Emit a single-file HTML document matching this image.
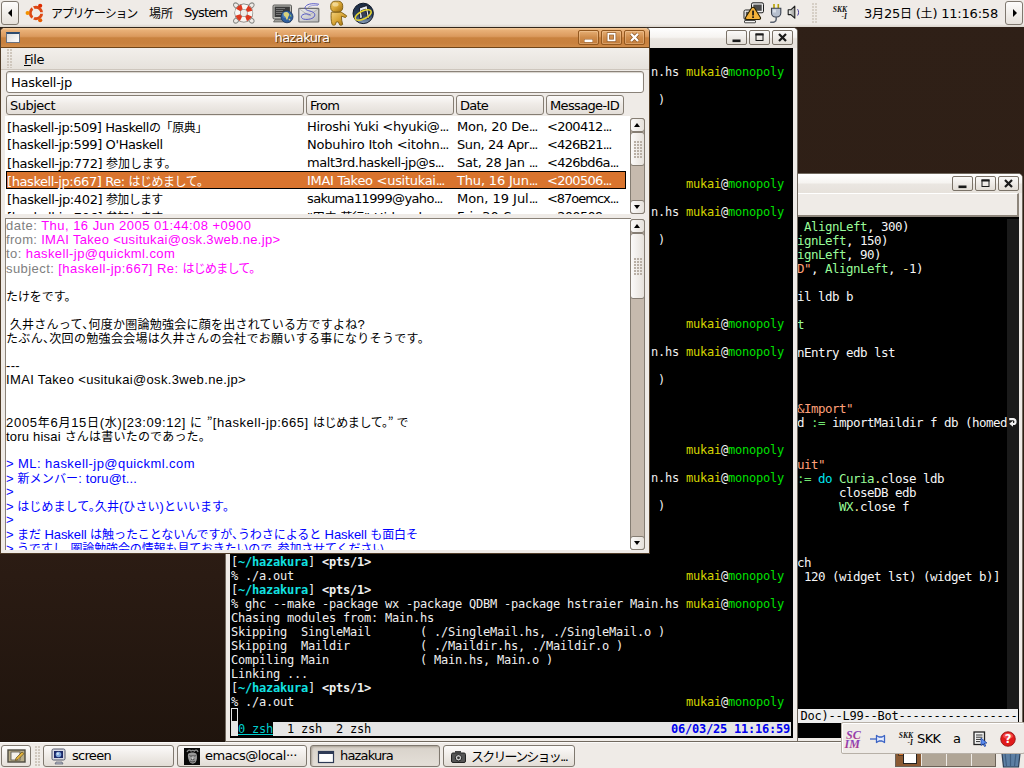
<!DOCTYPE html>
<html lang="ja"><head><meta charset="utf-8"><title>hazakura</title>
<style>
*{box-sizing:border-box;margin:0;padding:0}
html,body{width:1024px;height:768px;overflow:hidden;background:#2e1e15}
body{position:relative;font-family:"DejaVu Sans","Liberation Sans","Noto Sans CJK JP",sans-serif;font-size:13px;color:#000}
.abs{position:absolute}
span.j{font-family:"Noto Sans CJK JP","DejaVu Sans",sans-serif;font-feature-settings:"halt"}
#desk{position:absolute;left:0;top:0;width:1024px;height:768px;background:linear-gradient(to bottom,#2f2017 0%,#2e1e15 65%,#2a1b13 75%,#1f140d 97%);overflow:hidden}
#tp{position:absolute;left:0;top:0;width:1024px;height:27px;background:linear-gradient(#efebe7 0,#efebe7 24px,#d9d3cb 27px)}
#bp{position:absolute;left:0;top:742px;width:1024px;height:26px;background:#efebe7;border-top:1px solid #fbfaf9}
.pt{position:absolute;top:0;height:26px;line-height:26px;font-size:13px;white-space:nowrap;color:#000}
.pt .j{font-size:12px}
.pbtn{position:absolute;border:1px solid #7f786f;border-radius:3px;background:linear-gradient(#fdfcfb,#e6e1db)}
.tri{position:absolute;width:0;height:0;border-style:solid}
.win{position:absolute;background:#efebe7}
.wbtn{position:absolute;width:21px;height:15px;border:1px solid #7a7268;border-radius:2px;background:linear-gradient(#fbfaf9,#e2ddd6)}
.wbtn.o{border-color:#93581f;background:linear-gradient(#e6ae74,#cf8c4b 50%,#c27c3a);box-shadow:inset 0 0 0 1px rgba(255,220,180,.35)}
.wbtn svg{position:absolute;left:0;top:0}
.mono{font-family:"DejaVu Sans Mono","Liberation Mono",monospace;font-size:12px;letter-spacing:-0.2246px;line-height:14px;white-space:pre}
.tl{position:absolute;height:14px;color:#efefef}
.y{color:#d6d600}.g{color:#00e000}.c{color:#12e2e2;font-weight:bold}.b{font-weight:bold}
/* hazakura */
.hdr{position:absolute;top:95px;height:20px;border:1px solid #857d73;border-radius:3px;background:linear-gradient(#fbfaf9 0%,#efebe7 45%,#e3ded8 100%);line-height:20px;padding-left:3px;font-size:13px;white-space:nowrap}
.row{position:absolute;left:6px;width:620px;height:18px;line-height:20px;font-size:13px;white-space:nowrap}
.row span.cell{position:absolute;top:0;white-space:pre}
.row .j{font-size:12px}
.row.sel{background:#d9742e;color:#fff;outline:1px solid #000;outline-offset:-1px}
.bl{position:absolute;left:6px;height:14px;line-height:14px;font-family:"Liberation Sans","Noto Sans CJK JP",sans-serif;font-size:13px;white-space:pre}
.bl .j{font-family:"Noto Sans CJK JP",sans-serif;font-size:12px}
.gr{color:#808080}.mg{color:#ff00ff}.bu{color:#0000ff}
.sb{position:absolute;width:15px;background:#c6baae;border:1px solid #857d73;border-radius:3px}
.sbb{position:absolute;left:-1px;width:15px;height:14px;border:1px solid #857d73;border-radius:3px;background:linear-gradient(90deg,#fbfaf9,#e6e1db)}
.el{letter-spacing:-1.3px}
.mono.em{font-size:12.5px;letter-spacing:-0.5256px}
span.jf{font-family:"Noto Sans CJK JP","DejaVu Sans",sans-serif;font-size:12px}
</style></head>
<body><div id="desk">
<div id="tp">
<div class="pbtn" style="left:1px;top:1px;width:18px;height:24px"><div class="tri" style="left:6px;top:7px;border-width:4.5px 4px 4.5px 0;border-color:transparent #000 transparent transparent"></div></div>
<svg class="abs" style="left:25px;top:2px" width="22" height="22" viewBox="-10 -10 20 20"><circle r="5.2" fill="none" stroke="#dd4814" stroke-width="2.6"/><g stroke="#efebe7" stroke-width="1.4"><line x1="0" y1="0" x2="9" y2="0"/><line x1="0" y1="0" x2="9" y2="0" transform="rotate(120)"/><line x1="0" y1="0" x2="9" y2="0" transform="rotate(240)"/></g><circle cx="-7.6" cy="0" r="1.9" fill="#f29100"/><circle cx="3.8" cy="-6.6" r="1.9" fill="#dd2c00"/><circle cx="3.8" cy="6.6" r="1.9" fill="#e65c00"/></svg>
<div class="pt" style="left:51px"><span class="" style="letter-spacing:-1.221px;"><span class="j">アプリケーション</span></span></div>
<div class="pt" style="left:149px"><span class="" style="letter-spacing:-0.008px;"><span class="j">場所</span></span></div>
<div class="pt" style="left:184px"><span class="" style="letter-spacing:-0.914px;">System</span></div>
<svg class="abs" style="left:233px;top:2px" width="23" height="22" viewBox="0 0 23 22"><g fill="none" stroke="#8a8a86" stroke-width="1"><ellipse cx="3.300" cy="3.600" rx="3" ry="2.200" transform="rotate(40 3.300 3.600)"/><ellipse cx="18.300" cy="3.600" rx="3" ry="2.200" transform="rotate(-40 18.300 3.600)"/><ellipse cx="3.300" cy="18.400" rx="3" ry="2.200" transform="rotate(-40 3.300 18.400)"/><ellipse cx="18.300" cy="18.400" rx="3" ry="2.200" transform="rotate(40 18.300 18.400)"/></g><circle cx="10.800" cy="11" r="6.300" fill="none" stroke="#77736e" stroke-width="6.200"/><circle cx="10.800" cy="11" r="6.300" fill="none" stroke="#f7f6f3" stroke-width="5"/><circle cx="10.800" cy="11" r="6.300" fill="none" stroke="#dd3a20" stroke-width="5" stroke-dasharray="4.618 5.278" stroke-dashoffset="-2.639"/></svg>
<svg class="abs" style="left:272px;top:3px" width="22" height="22" viewBox="0 0 22 22"><rect x="1" y="2" width="18.500" height="14" rx="1.200" fill="#bdbdb8" stroke="#4a4a48" stroke-width="0.900"/><rect x="2.600" y="3.600" width="15.300" height="10.400" fill="#3a3a3a"/><path d="M4 5.500h9M4 7.500h7M4 9.500h8M4 11.500h5" stroke="#8f8f8f" stroke-width="0.700"/><path d="M3 16.500h14l1.500 2.500H1.500z" fill="#9c9c98" stroke="#4a4a48" stroke-width="0.600"/><circle cx="15" cy="13.800" r="6" fill="#2f5f9f" stroke="#1a365f" stroke-width="0.800"/><circle cx="13.600" cy="12" r="3.300" fill="#5f8fd0" opacity="0.550"/><path d="M11.500 10.300c1.200-1.300 2.800-1.600 4.300-.8l1.200 1.300c.6 1.200-.2 2-.8 3-.4 1.200-.3 2.400-1.200 3-.9-.3-1-1.600-1.300-2.600-.4-1-1.800-1.200-2-2.300z" fill="#d9d17c"/><path d="M17.600 11.200c1 .4 1.800 1.200 2 2.200-.6.800-1.400.2-1.800-.6z" fill="#8fb56a"/><path d="M16.800 15.800c.8-.4 1.500 0 1.600.7-.4.900-1.100 1.200-1.700.6z" fill="#d9d17c"/></svg>
<svg class="abs" style="left:297px;top:2px" width="24" height="22" viewBox="0 0 24 22"><defs><linearGradient id="mg" x1="0" y1="0" x2="1" y2="1"><stop offset="0" stop-color="#ededed"/><stop offset="1" stop-color="#b9b9b9"/></linearGradient></defs><rect x="1.800" y="6.400" width="20" height="13.600" rx="0.800" fill="url(#mg)" stroke="#6e6e6e" stroke-width="1.200"/><path d="M2.500 7l9.300 6.500 9.300-6.500" fill="none" stroke="#a5a5a5" stroke-width="0.700"/><path d="M22 2.300c-5-1-11-1-13.500 2.200-1.500 2.500 1 3.800 4.500 4.600 3.500.8 5.500 2.400 4.600 4.800-1 2.800-6.500 4.200-11 3.200-2.500-.8-3-2.800-1-4.300 2.500-1.600 6-1 8 .5" fill="none" stroke="#4a4ec4" stroke-width="1" opacity="0.900"/><path d="M21 3.500c-4-.5-8 0-10 2" fill="none" stroke="#7a7ed8" stroke-width="0.700"/></svg>
<svg class="abs" style="left:329px;top:0px" width="19" height="26" viewBox="0 0 19 26"><defs><linearGradient id="gd" x1="0" y1="0" x2="1" y2="1"><stop offset="0" stop-color="#f2d07c"/><stop offset="0.500" stop-color="#d9a636"/><stop offset="1" stop-color="#9a6a0e"/></linearGradient></defs><path d="M2.300 12.200c-.5 4.300-.3 8.500.8 12.300.8.900 2.200.9 3.200.2l.9-2.600c.8-.3 1.500-.3 2.200 0l1.300 2.800c1 .6 2.200.4 3-.4-.9-2.900-1.300-5.700-1.300-8.300l3.900 1.300c.9-.3 1.400-1 1.300-1.800l-5.500-3.600z" fill="url(#gd)" stroke="#7a5a10" stroke-width="0.900" stroke-linejoin="round"/><rect x="1.700" y="1.200" width="12" height="10.800" rx="4.300" fill="url(#gd)" stroke="#7a5a10" stroke-width="0.900"/><ellipse cx="6.500" cy="4.500" rx="3" ry="2" fill="#fff3c8" opacity="0.550"/></svg>
<svg class="abs" style="left:352px;top:2px" width="23" height="23" viewBox="0 0 23 23"><defs><linearGradient id="dk" x1="0" y1="0" x2="0" y2="1"><stop offset="0" stop-color="#1a2940"/><stop offset="0.600" stop-color="#2c4060"/><stop offset="1" stop-color="#8ea3be"/></linearGradient></defs><circle cx="11.200" cy="11.400" r="10.200" fill="url(#dk)" stroke="#0f1826" stroke-width="1"/><path d="M7.500 6l7.500-2.500 2.500 12-2 1.200-1.800-9.500-4.500 1.500 1.300 7-2.800 1z" fill="#e6ebf2" stroke="#14141c" stroke-width="0.900" stroke-linejoin="round"/><path d="M9.500 9.500l3.500-1.200.8 4.500-3.400 1z" fill="#3a3f55"/><ellipse cx="11.200" cy="13" rx="8.800" ry="3.900" transform="rotate(-27 11.200 13)" fill="none" stroke="#e6d52e" stroke-width="1.600"/></svg>
<svg class="abs" style="left:742px;top:1px" width="24" height="24" viewBox="0 0 24 24"><rect x="9.500" y="1.800" width="12" height="10" rx="1.500" fill="#ececec" stroke="#1e1e1e" stroke-width="1"/><rect x="11.300" y="3.600" width="8.400" height="6.200" fill="#4a4a4a"/><rect x="2" y="9" width="12" height="9.500" rx="1.500" fill="#f4f4f4" stroke="#1e1e1e" stroke-width="1"/><rect x="3.800" y="10.800" width="8.400" height="5.800" fill="#555"/><rect x="2.500" y="19.500" width="11" height="2.300" rx="0.500" fill="#f4f4f4" stroke="#1e1e1e" stroke-width="0.800"/><path d="M11 6.200c.8 0 1.300.4 1.700 1.100l5.600 8.900c.7 1.200.1 2.300-1.300 2.300H5c-1.400 0-2-1.100-1.300-2.300l5.600-8.900c.400-.700.900-1.100 1.700-1.100z" fill="#f4b23a" stroke="#2a2000" stroke-width="1.100" stroke-linejoin="round"/><rect x="10.200" y="9.600" width="1.700" height="4.800" rx="0.500" fill="#111"/><rect x="10.200" y="15.300" width="1.700" height="1.700" rx="0.500" fill="#111"/></svg>
<svg class="abs" style="left:768px;top:1px" width="15" height="24" viewBox="0 0 15 24"><path d="M6 3v4.500M10.300 3v4.500" stroke="#d8c21a" stroke-width="1.700"/><path d="M6 3v4.500M10.300 3v4.500" stroke="#5a5200" stroke-width="0.400" fill="none"/><path d="M3.500 7.300h9.300v4.700c0 2.300-1.800 4-4 4h-1.300c-2.200 0-4-1.700-4-4z" fill="#b6bfce" stroke="#3a4150" stroke-width="1.100"/><path d="M5 8.500h3v3h-3z" fill="#e6eaf2" opacity="0.700"/><path d="M8.200 16v2.200c0 2.500-2.500 3.600-6 3" fill="none" stroke="#5a6270" stroke-width="1.500"/></svg>
<svg class="abs" style="left:786px;top:5px" width="16" height="15" viewBox="0 0 16 15"><defs><linearGradient id="spk" x1="0" y1="0" x2="1" y2="0"><stop offset="0" stop-color="#f2f2f0"/><stop offset="1" stop-color="#9a9a98"/></linearGradient></defs><path d="M2.200 4.800h2.600l4-3.600v12l-4-3.600H2.200z" fill="url(#spk)" stroke="#1c1c1c" stroke-width="1.100" stroke-linejoin="round"/><path d="M11.600 4.200c1.300 1.900 1.300 4.500 0 6.300" fill="none" stroke="#4a3f9a" stroke-width="1"/></svg>
<div class="abs" style="left:812px;top:3px;width:5px;height:21px;background-image:radial-gradient(circle at 1px 1px,#d6cfc6 0.800px,transparent 1px);background-size:3px 3px"></div>
<div class="abs" style="left:829px;top:6px;width:18px;height:14px;font-family:'Liberation Serif','DejaVu Serif',serif;font-style:italic;font-weight:bold;font-size:7.500px;line-height:7px;color:#111;text-align:right;white-space:pre">SKK
-I</div>
<div class="pt" style="left:864px"><span class="" style="letter-spacing:-0.205px;">3<span class="j">月</span>25<span class="j">日</span> (<span class="j">土</span>) 11:16:58</span></div>
<div class="pbtn" style="left:1005px;top:1px;width:18px;height:24px"><div class="tri" style="left:7px;top:7px;border-width:4.5px 0 4.5px 4px;border-color:transparent transparent transparent #000"></div></div>
</div>
<div class="win" id="em" style="left:790px;top:173px;width:233px;height:569px;border:1px solid #71695f;border-radius:5px 5px 0 0;overflow:hidden">
<div class="abs" style="left:0;top:0;width:233px;height:19px;background:linear-gradient(#ffffff 0%,#f6f4f1 46%,#eae6e1 54%,#e6e1db 100%)"></div>
<div class="abs" style="left:0;top:19px;width:228px;height:24px;background:#efebe7;border-top:1px solid #fff;border-right:2px solid #8d857b;border-bottom:2px solid #8d857b"></div>
<div class="abs" style="left:0;top:43px;width:228px;height:521px;background:#000"></div>
<div class="abs" style="left:216px;top:45px;width:12px;height:490px;background:#1a1a1a"></div>
<div class="tl mono em" style="left:6px;top:46px"><span style="color:#f5f5f5"> </span><span style="color:#98fb98">AlignLeft</span><span style="color:#f5f5f5">, 300)</span></div>
<div class="tl mono em" style="left:6px;top:60px"><span style="color:#98fb98">ignLeft</span><span style="color:#f5f5f5">, 150)</span></div>
<div class="tl mono em" style="left:6px;top:74px"><span style="color:#98fb98">ignLeft</span><span style="color:#f5f5f5">, 90)</span></div>
<div class="tl mono em" style="left:6px;top:88px"><span style="color:#ffa07a">D"</span><span style="color:#f5f5f5">, </span><span style="color:#98fb98">AlignLeft</span><span style="color:#f5f5f5">, </span><span style="color:#eedd82">-</span><span style="color:#f5f5f5">1)</span></div>
<div class="tl mono em" style="left:6px;top:116px"><span style="color:#f5f5f5">il ldb b</span></div>
<div class="tl mono em" style="left:6px;top:144px"><span style="color:#98fb98">t</span></div>
<div class="tl mono em" style="left:6px;top:172px"><span style="color:#f5f5f5">nEntry edb lst</span></div>
<div class="tl mono em" style="left:6px;top:228px"><span style="color:#ffa07a">&amp;Import"</span></div>
<div class="tl mono em" style="left:6px;top:242px"><span style="color:#f5f5f5">d </span><span style="color:#70e670">:=</span><span style="color:#f5f5f5"> importMaildir f db (homed</span></div>
<div class="tl mono em" style="left:6px;top:284px"><span style="color:#ffa07a">uit"</span></div>
<div class="tl mono em" style="left:6px;top:298px"><span style="color:#70e670">:=</span><span style="color:#f5f5f5"> </span><span style="color:#00e5ee">do</span><span style="color:#f5f5f5"> </span><span style="color:#98fb98">Curia</span><span style="color:#eedd82">.</span><span style="color:#f5f5f5">close ldb</span></div>
<div class="tl mono em" style="left:6px;top:312px"><span style="color:#f5f5f5">      closeDB edb</span></div>
<div class="tl mono em" style="left:6px;top:326px"><span style="color:#f5f5f5">      </span><span style="color:#98fb98">WX</span><span style="color:#eedd82">.</span><span style="color:#f5f5f5">close f</span></div>
<div class="tl mono em" style="left:6px;top:382px"><span style="color:#f5f5f5">ch</span></div>
<div class="tl mono em" style="left:6px;top:396px"><span style="color:#f5f5f5"> 120 (widget lst) (widget b)]</span></div>
<svg class="abs" style="left:217px;top:243px" width="10" height="10"><path d="M1.200 2.200h4a2.300 2.300 0 0 1 2.300 2.300v0.500a2 2 0 0 1 -2 2h-1" stroke="#f2f2f2" stroke-width="2.200" fill="none"/><path d="M5 3.800L1.200 6.800l3.800 3z" fill="#f2f2f2"/></svg>
<div class="abs mono" style="left:7px;top:535px;width:220px;height:14px;background:#eeeeee;color:#000;overflow:hidden;padding-left:2.5px">Doc)--L99--Bot-------------------------</div>
<div class="wbtn" style="left:161px;top:2px"><svg width="19" height="13" viewBox="-0.5 0 19 13"><rect x="5" y="8.5" width="8" height="2.6" fill="#1a1a1a"/></svg></div><div class="wbtn" style="left:184px;top:2px"><svg width="19" height="13" viewBox="-0.5 0 19 13"><rect x="5.500" y="3" width="7" height="6.500" fill="none" stroke="#1a1a1a" stroke-width="1"/><rect x="5" y="2.500" width="8" height="2" fill="#1a1a1a"/></svg></div><div class="wbtn" style="left:207px;top:2px"><svg width="19" height="13" viewBox="-0.5 0 19 13"><path d="M5.500 3L12.500 10M12.500 3L5.500 10" stroke="#1a1a1a" stroke-width="2.2" fill="none"/></svg></div>
</div>
<div class="win" id="tm" style="left:225px;top:27px;width:573px;height:715px;border:1px solid #71695f;border-top-color:#3c3128;border-radius:5px 5px 0 0;overflow:hidden">
<div class="abs" style="left:0;top:0;width:573px;height:20px;background:linear-gradient(#ffffff 0%,#f6f4f1 46%,#eae6e1 54%,#e6e1db 100%)"></div>
<div class="abs" style="left:4px;top:20px;width:563px;height:690px;background:#000"></div>
<div class="tl mono" style="left:425px;top:37px">n.hs <span class="y">mukai</span>@<span class="g">monopoly</span></div>
<div class="tl mono" style="left:425px;top:65px"> )</div>
<div class="tl mono" style="left:425px;top:149px">     <span class="y">mukai</span>@<span class="g">monopoly</span></div>
<div class="tl mono" style="left:425px;top:177px">n.hs <span class="y">mukai</span>@<span class="g">monopoly</span></div>
<div class="tl mono" style="left:425px;top:205px"> )</div>
<div class="tl mono" style="left:425px;top:289px">     <span class="y">mukai</span>@<span class="g">monopoly</span></div>
<div class="tl mono" style="left:425px;top:317px">n.hs <span class="y">mukai</span>@<span class="g">monopoly</span></div>
<div class="tl mono" style="left:425px;top:345px"> )</div>
<div class="tl mono" style="left:425px;top:415px">     <span class="y">mukai</span>@<span class="g">monopoly</span></div>
<div class="tl mono" style="left:425px;top:443px">n.hs <span class="y">mukai</span>@<span class="g">monopoly</span></div>
<div class="tl mono" style="left:425px;top:471px"> )</div>
<div class="tl mono" style="left:5px;top:527px">[<span class="c">~/hazakura</span>] <span class="b">&lt;pts/1&gt;</span></div>
<div class="tl mono" style="left:5px;top:541px">% ./a.out                                                        <span class="y">mukai</span>@<span class="g">monopoly</span></div>
<div class="tl mono" style="left:5px;top:555px">[<span class="c">~/hazakura</span>] <span class="b">&lt;pts/1&gt;</span></div>
<div class="tl mono" style="left:5px;top:569px">% ghc --make -package wx -package QDBM -package hstraier Main.hs <span class="y">mukai</span>@<span class="g">monopoly</span></div>
<div class="tl mono" style="left:5px;top:583px">Chasing modules from: Main.hs</div>
<div class="tl mono" style="left:5px;top:597px">Skipping  SingleMail       ( ./SingleMail.hs, ./SingleMail.o )</div>
<div class="tl mono" style="left:5px;top:611px">Skipping  Maildir          ( ./Maildir.hs, ./Maildir.o )</div>
<div class="tl mono" style="left:5px;top:625px">Compiling Main             ( Main.hs, Main.o )</div>
<div class="tl mono" style="left:5px;top:639px">Linking ...</div>
<div class="tl mono" style="left:5px;top:653px">[<span class="c">~/hazakura</span>] <span class="b">&lt;pts/1&gt;</span></div>
<div class="tl mono" style="left:5px;top:667px">% ./a.out                                                        <span class="y">mukai</span>@<span class="g">monopoly</span></div>
<div class="abs" style="left:5px;top:680px;width:7px;height:14px;border:1px solid #e5e5e5"></div>
<div class="abs mono" style="left:5px;top:694px;width:560px;height:14px;line-height:15px;background:#e5e5e5;color:#000"> <span style="background:#000;color:#00cdcd;text-decoration:underline">0 zsh</span>  1 zsh  2 zsh<span class="abs" style="right:1px;top:0;color:#0000ee;font-weight:bold">06/03/25 11:16:59</span></div>
<div class="wbtn" style="left:500px;top:2px"><svg width="19" height="13" viewBox="-0.5 0 19 13"><rect x="5" y="8.5" width="8" height="2.6" fill="#1a1a1a"/></svg></div><div class="wbtn" style="left:523px;top:2px"><svg width="19" height="13" viewBox="-0.5 0 19 13"><rect x="5.500" y="3" width="7" height="6.500" fill="none" stroke="#1a1a1a" stroke-width="1"/><rect x="5" y="2.500" width="8" height="2" fill="#1a1a1a"/></svg></div><div class="wbtn" style="left:546px;top:2px"><svg width="19" height="13" viewBox="-0.5 0 19 13"><path d="M5.500 3L12.500 10M12.500 3L5.500 10" stroke="#1a1a1a" stroke-width="2.2" fill="none"/></svg></div>
</div>
<div class="win" id="hz" style="left:0;top:27px;width:650px;height:527px;border:1px solid #4f3c28;border-top-color:#33261a;border-radius:5px 5px 0 0;overflow:hidden">
<div class="abs" style="left:0;top:0;width:648px;height:20px;background:linear-gradient(#f4cda0 0%,#e9b077 12%,#db9a5d 44%,#c9823f 52%,#c8813e 80%,#d08c4a 100%);border-bottom:1px solid #6f4519"></div>
<div class="abs" style="left:5px;top:4px;width:14px;height:11px;border:1px solid #6b7280;background:linear-gradient(135deg,#dcdcdc,#ffffff);border-top:2px solid #2c4a6e"></div>
<div class="abs" style="left:0;top:0;width:602px;height:20px;line-height:20px;text-align:center;color:#fff;font-size:13px;text-shadow:1px 1px 0 #5b3a15"><span class="" style="letter-spacing:-0.586px;">hazakura</span></div>
<div class="wbtn o" style="left:577px;top:2px"><svg width="19" height="13" viewBox="-0.5 0 19 13"><rect x="5" y="8.5" width="8" height="2.6" fill="#fff" stroke="#8a5424" stroke-width="0.8" paint-order="stroke"/></svg></div><div class="wbtn o" style="left:600px;top:2px"><svg width="19" height="13" viewBox="-0.5 0 19 13"><rect x="5.8" y="2.8" width="6.4" height="6.6" fill="none" stroke="#8a5424" stroke-width="3"/><rect x="5.8" y="2.8" width="6.4" height="6.6" fill="none" stroke="#fff" stroke-width="1.7"/></svg></div><div class="wbtn o" style="left:623px;top:2px"><svg width="19" height="13" viewBox="-0.5 0 19 13"><path d="M5.5 2.8L12.5 10M12.5 2.8L5.5 10" stroke="#8a5424" stroke-width="3.6" fill="none"/><path d="M5.5 2.8L12.5 10M12.5 2.8L5.500 10" stroke="#fff" stroke-width="2.3" fill="none"/></svg></div>
<div class="abs" style="left:0;top:20px;width:648px;height:22px;background:linear-gradient(#f2efeb,#e6e2dc);border-bottom:1px solid #cdc6bd"></div>
<div class="abs" style="left:6px;top:21px;width:5px;height:19px;background-image:radial-gradient(circle at 1px 1px,#cfc7bd 0.8px,transparent 1px);background-size:3px 3px"></div>
<div class="abs" style="left:23px;top:20px;height:22px;line-height:23px;font-size:13px"><span class="" style="letter-spacing:-0.441px;display:inline-block">File</span><div class="abs" style="left:0;top:17px;width:7px;height:1px;background:#000"></div></div>
<div class="abs" style="left:5px;top:43px;width:638px;height:22px;background:#fff;border:1px solid #8a8279;border-radius:3px;box-shadow:inset 0 1px 1px #d8d3cc;line-height:21px;padding-left:4px;font-size:13px"><span class="" style="letter-spacing:-0.236px;">Haskell-jp</span></div>
<div class="hdr" style="left:5px;top:67px;width:298px"><span class="" style="letter-spacing:-0.516px;">Subject</span></div>
<div class="hdr" style="left:305px;top:67px;width:148px"><span class="" style="letter-spacing:-0.805px;">From</span></div>
<div class="hdr" style="left:455px;top:67px;width:88px"><span class="" style="letter-spacing:-0.770px;">Date</span></div>
<div class="hdr" style="left:545px;top:67px;width:78px"><span class="" style="letter-spacing:-0.652px;">Message-ID</span></div>
<div class="abs" style="left:4px;top:88px;width:625px;height:98px;background:#fff;overflow:hidden">
<div class="row" style="left:1px;top:1px"><span class="cell" style="left:1px"><span class="" style="letter-spacing:-0.421px;">[haskell-jp:509] Haskell</span><span class="" style="letter-spacing:-0.403px;"><span class="jf">の「原典」</span></span></span><span class="cell" style="left:301px"><span class="" style="letter-spacing:-0.292px;">Hiroshi Yuki &lt;hyuki@</span><span class="el">...</span></span><span class="cell" style="left:451px"><span class="" style="letter-spacing:-0.266px;">Mon, 20 De</span><span class="el">...</span></span><span class="cell" style="left:541px"><span class="" style="letter-spacing:-0.688px;">&lt;200412</span><span class="el">...</span></span></div>
<div class="row" style="left:1px;top:19px"><span class="cell" style="left:1px"><span class="" style="letter-spacing:-0.393px;">[haskell-jp:599] O'Haskell</span></span><span class="cell" style="left:301px"><span class="" style="letter-spacing:-0.198px;">Nobuhiro Itoh &lt;itohn</span><span class="el">...</span></span><span class="cell" style="left:451px"><span class="" style="letter-spacing:-0.406px;">Sun, 24 Apr</span><span class="el">...</span></span><span class="cell" style="left:541px"><span class="" style="letter-spacing:-0.781px;">&lt;426B21</span><span class="el">...</span></span></div>
<div class="row" style="left:1px;top:37px"><span class="cell" style="left:1px"><span class="" style="letter-spacing:-0.370px;">[haskell-jp:772] </span><span class="" style="letter-spacing:-0.051px;"><span class="j">参加します。</span></span></span><span class="cell" style="left:301px"><span class="" style="letter-spacing:-0.450px;">malt3rd.haskell-jp@s</span><span class="el">...</span></span><span class="cell" style="left:451px"><span class="" style="letter-spacing:-0.227px;">Sat, 28 Jan </span><span class="el">...</span></span><span class="cell" style="left:541px"><span class="" style="letter-spacing:-0.719px;">&lt;426bd6a</span><span class="el">...</span></span></div>
<div class="row sel" style="left:1px;top:55px"><span class="cell" style="left:1px"><span class="" style="letter-spacing:-0.417px;">[haskell-jp:667] Re: </span><span class="" style="letter-spacing:-0.470px;"><span class="j">はじめまして。</span></span></span><span class="cell" style="left:301px"><span class="" style="letter-spacing:-0.293px;">IMAI Takeo &lt;usitukai</span><span class="el">...</span></span><span class="cell" style="left:451px"><span class="" style="letter-spacing:-0.180px;">Thu, 16 Jun</span><span class="el">...</span></span><span class="cell" style="left:541px"><span class="" style="letter-spacing:-0.690px;">&lt;200506</span><span class="el">...</span></span></div>
<div class="row" style="left:1px;top:73px"><span class="cell" style="left:1px"><span class="" style="letter-spacing:-0.370px;">[haskell-jp:402] </span><span class="" style="letter-spacing:-0.662px;"><span class="j">参加します</span></span></span><span class="cell" style="left:301px"><span class="" style="letter-spacing:-0.641px;">sakuma11999@yaho</span><span class="el">...</span></span><span class="cell" style="left:451px"><span class="" style="letter-spacing:-0.031px;">Mon, 19 Jul</span><span class="el">...</span></span><span class="cell" style="left:541px"><span class="" style="letter-spacing:-1.025px;">&lt;87oemcx</span><span class="el">...</span></span></div>
<div class="row" style="left:1px;top:91px"><span class="cell" style="left:1px"><span class="" style="letter-spacing:-0.370px;">[haskell-jp:706] </span><span class="" style="letter-spacing:-0.661px;"><span class="j">参加します</span></span></span><span class="cell" style="left:301px"><span class="" style="letter-spacing:-0.182px;">"<span class="j">田中</span> <span class="j">英行</span>" Hidenobu</span><span class="el">...</span></span><span class="cell" style="left:451px"><span class="" style="letter-spacing:0.251px;">Fri, 30 Sep</span><span class="el">...</span></span><span class="cell" style="left:541px"><span class="" style="letter-spacing:-0.688px;">&lt;200509</span><span class="el">...</span></span></div>
</div>
<div class="sb" style="left:629px;top:90px;height:96px"><div class="sbb" style="top:-1px"><div class="tri" style="left:3px;top:4px;border-width:0 3.5px 4px 3.5px;border-color:transparent transparent #000 transparent"></div></div><div class="sbb" style="top:81px"><div class="tri" style="left:3px;top:4px;border-width:4px 3.5px 0 3.5px;border-color:#000 transparent transparent transparent"></div></div><div class="sbb" style="top:13px;height:34px"><div class="abs" style="left:3px;top:8px;width:8px;height:17px;background-image:radial-gradient(circle at 1px 1px,#b9b0a6 0.8px,transparent 1px);background-size:3px 3px"></div></div></div>
<div class="abs" style="left:4px;top:190px;width:626px;height:332px;background:#fff;border-top:1px solid #8a8279;border-left:1px solid #8a8279;overflow:hidden">
<div class="bl" style="left:0px;top:0px;letter-spacing:0.475px;"><span class="gr">date: </span><span class="mg">Thu, 16 Jun 2005 01:44:08 +0900</span></div>
<div class="bl" style="left:0px;top:14px;letter-spacing:0.323px;"><span class="gr">from: </span><span class="mg">IMAI Takeo &lt;usitukai@osk.3web.ne.jp&gt;</span></div>
<div class="bl" style="left:0px;top:28px;letter-spacing:0.414px;"><span class="gr">to: </span><span class="mg">haskell-jp@quickml.com</span></div>
<div class="bl" style="left:0px;top:42px"><span class="gr" style="letter-spacing:0.431px;">subject: </span><span class="mg" style="letter-spacing:0.447px;">[haskell-jp:667] Re: </span><span class="mg" style="letter-spacing:-0.771px;"><span class="j">はじめまして。</span></span></div>
<div class="bl" style="left:0px;top:70px;letter-spacing:-0.084px;"><span class="j">たけをです。</span></div>
<div class="bl" style="left:0px;top:98px;letter-spacing:0.248px;"> <span class="j">久井さんって、何度か圏論勉強会に顔を出されている方ですよね</span>?</div>
<div class="bl" style="left:0px;top:112px;letter-spacing:0.320px;"><span class="j">たぶん、次回の勉強会会場は久井さんの会社でお願いする事になりそうです。</span></div>
<div class="bl" style="left:0px;top:140px;letter-spacing:0.333px;">---</div>
<div class="bl" style="left:0px;top:154px;letter-spacing:0.345px;">IMAI Takeo &lt;usitukai@osk.3web.ne.jp&gt;</div>
<div class="bl" style="left:0px;top:196px"><span class="" style="letter-spacing:0.708px;">2005<span class="j">年</span>6<span class="j">月</span>15<span class="j">日</span>(<span class="j">水</span>)</span><span class="" style="letter-spacing:0.551px;">[23:09:12] </span><span class="" style="letter-spacing:0.455px;"><span class="j">に</span> <span class="j">”</span></span><span class="" style="letter-spacing:0.532px;">[haskell-jp:665] </span><span class="" style="letter-spacing:-0.343px;"><span class="j">はじめまして。”</span> <span class="j">で</span></span></div>
<div class="bl" style="left:0px;top:210px;letter-spacing:0.206px;">toru hisai <span class="j">さんは書いたのであった。</span></div>
<div class="bl" style="left:0px;top:238px;letter-spacing:0.434px;"><span class="bu">&gt; ML: haskell-jp@quickml.com</span></div>
<div class="bl" style="left:0px;top:252px;letter-spacing:0.139px;"><span class="bu">&gt; <span class="j">新メンバー</span>: toru@t...</span></div>
<div class="bl" style="left:0px;top:266px;letter-spacing:-0.602px;"><span class="bu">&gt;</span></div>
<div class="bl" style="left:0px;top:280px;letter-spacing:0.044px;"><span class="bu">&gt; <span class="j">はじめまして。久井</span>(<span class="j">ひさい</span>)<span class="j">といいます。</span></span></div>
<div class="bl" style="left:0px;top:294px;letter-spacing:-0.594px;"><span class="bu">&gt;</span></div>
<div class="bl" style="left:0px;top:308px;letter-spacing:-0.074px;"><span class="bu">&gt; <span class="j">まだ</span> Haskell <span class="j">は触ったことないんですが、うわさによると</span> Haskell <span class="j">も面白そ</span></span></div>
<div class="bl" style="left:0px;top:322px;letter-spacing:-0.115px;"><span class="bu">&gt; <span class="j">うですし、圏論勉強会の情報も見ておきたいので、参加させてください。</span></span></div>
</div>
<div class="sb" style="left:629px;top:191px;height:331px"><div class="sbb" style="top:-1px"><div class="tri" style="left:3px;top:4px;border-width:0 3.5px 4px 3.5px;border-color:transparent transparent #000 transparent"></div></div><div class="sbb" style="top:316px"><div class="tri" style="left:3px;top:4px;border-width:4px 3.5px 0 3.5px;border-color:#000 transparent transparent transparent"></div></div><div class="sbb" style="top:13px;height:66px"><div class="abs" style="left:3px;top:24px;width:8px;height:17px;background-image:radial-gradient(circle at 1px 1px,#b9b0a6 0.8px,transparent 1px);background-size:3px 3px"></div></div></div>
</div>
<div id="bp">
<div class="pbtn" style="left:1px;top:2px;width:30px;height:22px"><svg class="abs" style="left:5px;top:3px" width="20" height="15" viewBox="0 0 20 15"><rect x="1" y="1" width="17" height="12" fill="#b8ad8a" stroke="#4d4a40" stroke-width="1.4"/><rect x="4" y="3" width="9" height="8" fill="#f4f2ea" stroke="#55524a" stroke-width="0.8"/><path d="M9 9l6-6 2 1.6-6 6-2.6 0.8z" fill="#e3b23c" stroke="#5a4a1a" stroke-width="0.7"/></svg></div>
<div class="abs" style="left:35px;top:3px;width:5px;height:21px;background-image:radial-gradient(circle at 1px 1px,#d0c8be 0.8px,transparent 1px);background-size:3px 3px"></div>
<div class="pbtn" style="left:43px;top:2px;width:131px;height:22px;background:linear-gradient(#fcfbfa 0%,#efebe7 50%,#e2ddd6 100%);"><div class="abs" style="left:6px;top:2px;width:18px;height:18px"><svg width="18" height="18" viewBox="0 0 18 18"><rect x="2" y="1" width="13" height="11" rx="1.5" fill="#d9d9e2" stroke="#55596b" stroke-width="1"/><rect x="4" y="3" width="9" height="7" fill="#1c2868"/><circle cx="8.500" cy="6.500" r="2.800" fill="#7fa6dc"/><circle cx="7.800" cy="5.800" r="1.200" fill="#cfe0f5"/><path d="M6 14h6l1 2H5z" fill="#b9bbc7" stroke="#55596b" stroke-width="0.7"/></svg></div><div class="abs" style="left:28px;top:0;height:20px;line-height:20px;font-size:13px;white-space:nowrap"><span class="" style="letter-spacing:-0.703px;">screen</span></div></div>
<div class="pbtn" style="left:177px;top:2px;width:130px;height:22px;background:linear-gradient(#fcfbfa 0%,#efebe7 50%,#e2ddd6 100%);"><div class="abs" style="left:6px;top:2px;width:18px;height:18px"><svg width="18" height="18" viewBox="0 0 18 18"><rect x="0" y="0" width="16" height="17" fill="#0a0a0a"/><path d="M3 4c1-2 3-2.500 4-1 1-.800 2.500-.800 3.500 0 1-1.500 3-1 3.500 1" fill="none" stroke="#8c8c8c" stroke-width="1.300"/><path d="M4 6c2-2 7-2 8.500 0 1 3 .500 6-1 8.500-1.500 1.500-4 1.500-5.500 0C4.500 12 3.500 9 4 6z" fill="#9a9a9a"/><path d="M5.500 7.500c1 .800 2 .800 3 0M9.500 7.500c.800.600 1.600.600 2.400 0M7 11c1 1 2.500 1 3.500 0M6 13c1.500 1.200 4 1.200 5 0" stroke="#3a3a3a" stroke-width="0.900" fill="none"/><path d="M7.500 9.500l1 2.500 1-2.500z" fill="#d5d5d5"/></svg></div><div class="abs" style="left:27px;top:0;height:20px;line-height:20px;font-size:13px;white-space:nowrap"><span class="" style="letter-spacing:-0.446px;">emacs@local···</span></div></div>
<div class="pbtn" style="left:310px;top:2px;width:130px;height:22px;background:linear-gradient(#d8d2ca,#e4dfd8);box-shadow:inset 1px 1px 2px #a9a196;"><div class="abs" style="left:6px;top:2px;width:18px;height:18px"><svg width="18" height="18" viewBox="0 0 18 18"><rect x="1.5" y="3.5" width="15" height="11" fill="#fdfdfd" stroke="#2e3a55" stroke-width="1.2"/><rect x="1" y="3" width="16" height="3" fill="#2e3a55"/></svg></div><div class="abs" style="left:29px;top:0;height:20px;line-height:20px;font-size:13px;white-space:nowrap"><span class="" style="letter-spacing:-0.836px;">hazakura</span></div></div>
<div class="pbtn" style="left:443px;top:2px;width:132px;height:22px;background:linear-gradient(#fcfbfa 0%,#efebe7 50%,#e2ddd6 100%);"><div class="abs" style="left:6px;top:2px;width:18px;height:18px"><svg width="18" height="18" viewBox="0 0 18 18"><rect x="1.5" y="5" width="14" height="9.5" rx="1.5" fill="#555" stroke="#222" stroke-width="1"/><rect x="5" y="3" width="6" height="3" fill="#444"/><circle cx="8.5" cy="9.8" r="3.2" fill="#cfcfcf" stroke="#222" stroke-width="1"/><circle cx="8.5" cy="9.8" r="1.4" fill="#333"/></svg></div><div class="abs" style="left:27px;top:0;height:20px;line-height:20px;font-size:13px;white-space:nowrap"><span class="" style="letter-spacing:-1.797px;"><span class="j">スクリーンショッ</span>...</span></div></div>
<div class="abs" style="left:895px;top:2px;width:101px;height:22px;background:#b0a596;border:1px solid #6b6258">
<div class="abs" style="left:0;top:0;width:25px;height:20px;background:#8a5a33"></div>
<div class="abs" style="left:2px;top:-4px;width:14px;height:14px;background:#d9742e;border:1px solid #4f3c28"></div>
<div class="abs" style="left:7px;top:2px;width:14px;height:16px;background:#fff;border:1px solid #222"></div>
<div class="abs" style="left:25px;top:0;width:1px;height:20px;background:#efebe7"></div><div class="abs" style="left:50px;top:0;width:1px;height:20px;background:#efebe7"></div><div class="abs" style="left:75px;top:0;width:1px;height:20px;background:#efebe7"></div>
</div>
<svg class="abs" style="left:1000px;top:3px" width="22" height="22" viewBox="0 0 22 22"><path d="M1.5 3h19l-2 18h-15z" fill="#5c7fa3" stroke="#2c3e55" stroke-width="1.2"/><path d="M1 2h20v3H1z" fill="#7e9cbb" stroke="#2c3e55" stroke-width="1"/><path d="M5 7l1.5 13M10.5 7v13M16 7l-1.5 13" stroke="#3f5e80" stroke-width="1.2"/></svg>
</div>
<div class="abs" style="left:841px;top:722px;width:184px;height:32px;background:#efebe7;border:1px solid #b7b0a7;border-radius:2px;box-shadow:inset 1px 1px 0 #fff">
<svg class="abs" style="left:2px;top:5px" width="20" height="22" viewBox="0 0 20 22"><defs><linearGradient id="sg" x1="0" y1="0" x2="0" y2="1"><stop offset="0" stop-color="#7a45d1"/><stop offset="1" stop-color="#b5367f"/></linearGradient></defs><text x="2" y="10.5" font-family="Liberation Serif,DejaVu Serif,serif" font-style="italic" font-weight="bold" font-size="12" fill="url(#sg)">SC</text><text x="0.5" y="20" font-family="Liberation Serif,DejaVu Serif,serif" font-style="italic" font-weight="bold" font-size="12" fill="url(#sg)">IM</text></svg>
<svg class="abs" style="left:28px;top:10px" width="16" height="12" viewBox="0 0 16 12"><path d="M0 6h7" stroke="#3b63c4" stroke-width="1.3"/><path d="M6.500 2.500l2.500 1.500h3l2.500-1.500v7l-2.500-1.500h-3l-2.500 1.500z" fill="#e4ecff" stroke="#3b63c4" stroke-width="1.3" stroke-linejoin="round"/></svg>
<div class="abs" style="left:54px;top:10px;width:17px;height:14px;font-family:'Liberation Serif','DejaVu Serif',serif;font-style:italic;font-weight:bold;font-size:7.5px;line-height:6.5px;color:#111;text-align:right;white-space:pre">SKK
-I</div>
<div class="abs" style="left:75px;top:0;height:32px;line-height:32px;font-size:13px"><span class="" style="letter-spacing:-0.604px;">SKK</span></div>
<div class="abs" style="left:111px;top:0;height:32px;line-height:32px;font-size:13px">a</div>
<svg class="abs" style="left:131px;top:8px" width="16" height="16" viewBox="0 0 16 16"><rect x="1" y="1" width="10.5" height="12.5" fill="#f3f3f3" stroke="#222" stroke-width="1.3"/><path d="M3 4h6.5M3 6.2h6.5M3 8.4h6.5M3 10.6h4" stroke="#333" stroke-width="1"/><path d="M8 7l6 5-2.6 0.3 1.4 2.7-1.3 0.6-1.3-2.8L8 14.5z" fill="#5b8df0" stroke="#1d3f9a" stroke-width="0.7"/></svg>
<svg class="abs" style="left:158px;top:8px" width="16" height="16" viewBox="0 0 16 16"><circle cx="8" cy="8" r="7.3" fill="#e11b1b" stroke="#8d0f0f" stroke-width="0.8"/><ellipse cx="8" cy="5" rx="5" ry="3" fill="#ff6a6a" opacity="0.6"/><text x="8" y="12.3" text-anchor="middle" font-family="DejaVu Sans,Liberation Sans,sans-serif" font-weight="bold" font-size="11.5" fill="#fff">?</text></svg>
</div>
</div></body></html>
